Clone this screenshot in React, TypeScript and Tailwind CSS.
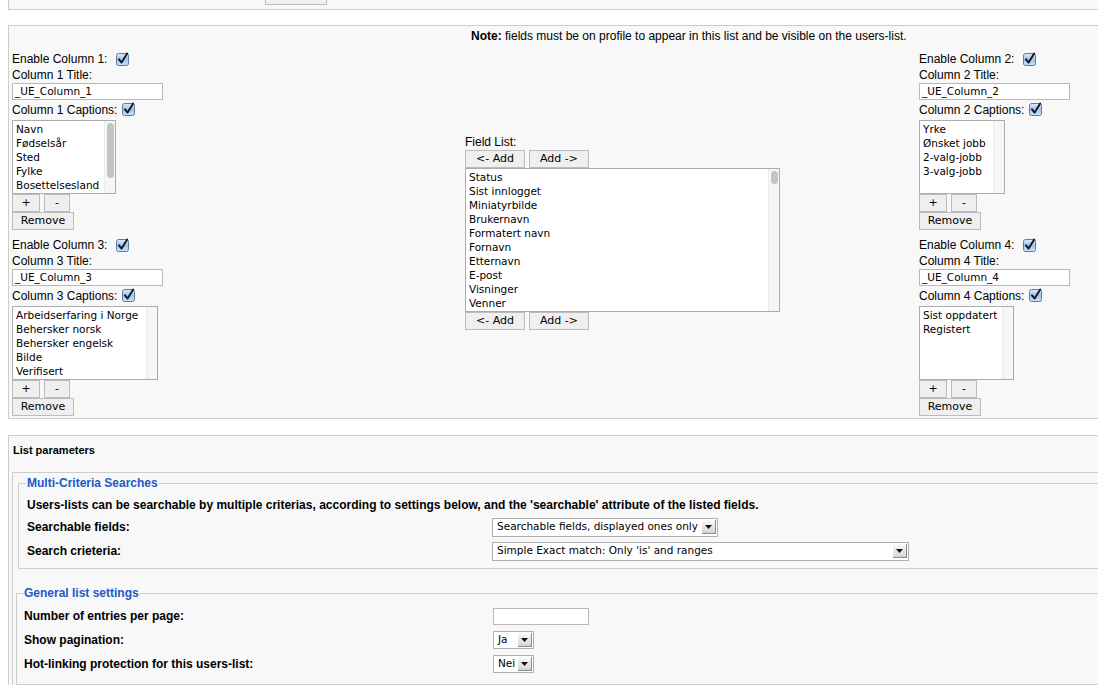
import React from 'react';

const sans = "font-['Liberation_Sans',Arial,sans-serif]";
const lucida = "font-['DejaVu_Sans',Verdana,sans-serif]";

// --- small widgets ---

const Check: React.FC<{ className?: string }> = ({ className = '' }) => (
  <svg width="13" height="13" viewBox="0 0 13 13" className={`overflow-visible ${className}`}>
    <defs>
      <linearGradient id="cbFill" x1="0" y1="0" x2="0" y2="1">
        <stop offset="0" stopColor="#dcecfc" />
        <stop offset="0.5" stopColor="#9cc4ee" />
        <stop offset="1" stopColor="#cfe4fa" />
      </linearGradient>
    </defs>
    <rect x="0.5" y="0.5" width="12" height="12" rx="2" fill="url(#cbFill)" stroke="#5b7aa8" />
    <path d="M3 6.3 L5.6 9.6 L11.2 0.6" fill="none" stroke="#161616" strokeWidth="1.9" strokeLinecap="round" strokeLinejoin="round" />
  </svg>
);

const Btn: React.FC<{ w: string; children: React.ReactNode }> = ({ w, children }) => (
  <div className={`flex h-[18px] items-center justify-center border border-[#bcbcbc] bg-[#efefef] text-[11px] text-black ${lucida} ${w}`}>
    {children}
  </div>
);

interface ListBoxProps {
  w: string;
  h: string;
  items: string[];
  thumb?: string;
}

const ListBox: React.FC<ListBoxProps> = ({ w, h, items, thumb }) => (
  <div className={`flex border border-[#acacac] bg-white ${w} ${h}`}>
    <div className={`flex-1 pl-[3px] pt-[1px] text-[10.5px] leading-[14px] text-black ${lucida}`}>
      {items.map((it) => (
        <div key={it} className="whitespace-nowrap">{it}</div>
      ))}
    </div>
    <div className="flex w-[11px] justify-center border-l border-[#ececec] bg-[#f6f6f6]">
      {thumb && <div className={`mt-[2px] w-[7px] rounded-full bg-[#c3c3c3] ${thumb}`} />}
    </div>
  </div>
);

const Select: React.FC<{ w: string; h: string; text: string }> = ({ w, h, text }) => (
  <div className={`flex items-center justify-between border border-[#b0b0b0] bg-white pl-[4px] pr-[1px] ${w} ${h}`}>
    <span className={`whitespace-nowrap text-[10.5px] text-black ${lucida}`}>{text}</span>
    <div className="flex h-[14px] w-[14px] shrink-0 items-center justify-center border-b border-r border-[#8a8a8a] bg-gradient-to-b from-[#fbfbfb] to-[#d4d4d4]">
      <svg width="7" height="4" viewBox="0 0 7 4">
        <polygon points="0,0 7,0 3.5,4" fill="#111" />
      </svg>
    </div>
  </div>
);

// --- column block ---

interface ColumnProps {
  n: number;
  items: string[];
  listW: string;
  thumb?: string;
}

const ColumnBlock: React.FC<ColumnProps> = ({ n, items, listW, thumb }) => (
  <div className="flex flex-col text-[12px] text-black">
    <div className="flex h-[16px] items-center">
      Enable Column {n}:<Check className="ml-[9px]" />
    </div>
    <div className="flex h-[16px] items-center">Column {n} Title:</div>
    <div className={`flex h-[17px] w-[151px] items-center border border-[#b8b8b8] bg-white pl-[2px] text-[10.5px] ${lucida}`}>
      _UE_Column_{n}
    </div>
    <div className="flex h-[19px] items-center">
      Column {n} Captions:<Check className="ml-[5px]" />
    </div>
    <div className="mt-[1px]">
      <ListBox w={listW} h="h-[74px]" items={items} thumb={thumb} />
    </div>
    <div className="flex gap-[4px]">
      <Btn w="w-[28px]">+</Btn>
      <Btn w="w-[26px]">-</Btn>
    </div>
    <Btn w="w-[62px]">Remove</Btn>
  </div>
);

const fieldList = [
  'Status',
  'Sist innlogget',
  'Miniatyrbilde',
  'Brukernavn',
  'Formatert navn',
  'Fornavn',
  'Etternavn',
  'E-post',
  'Visninger',
  'Venner',
];

export default function App() {
  return (
    <div className={`h-[686px] w-[1098px] overflow-hidden bg-white ${sans}`}>
      <div className="w-[1400px] pl-[8px]">
        {/* previous panel, cut off */}
        <div className="flex h-[10px] items-end overflow-hidden border-b border-l border-[#cdcdcd] bg-[#f8f8f8] pb-[4px] pl-[256px]">
          <Btn w="w-[62px] shrink-0">Remove</Btn>
        </div>

        {/* columns panel */}
        <div className="mt-[15px] border-b border-l border-t border-[#cdcdcd] bg-[#f8f8f8] pb-[2px] pl-[3px]">
          <div className="flex h-[20px] items-center pl-[459px] text-[12px] text-black">
            <b>Note:</b>&nbsp;fields must be on profile to appear in this list and be visible on the users-list.
          </div>
          <div className="grid grid-cols-[453px_454px_1fr] pt-[5px]">
            <div className="flex flex-col gap-[7px]">
              <ColumnBlock n={1} items={['Navn', 'Fødselsår', 'Sted', 'Fylke', 'Bosettelsesland']} listW="w-[104px]" thumb="h-[55px]" />
              <ColumnBlock n={3} items={['Arbeidserfaring i Norge', 'Behersker norsk', 'Behersker engelsk', 'Bilde', 'Verifisert']} listW="w-[146px]" />
            </div>

            <div className="flex items-center pb-[3px]">
              <div className="flex flex-col text-[12px] text-black">
                <div className="flex h-[16px] items-center">Field List:</div>
                <div className="flex gap-[4px]">
                  <Btn w="w-[60px]">&lt;- Add</Btn>
                  <Btn w="w-[60px]">Add -&gt;</Btn>
                </div>
                <ListBox w="w-[315px]" h="h-[144px]" items={fieldList} thumb="h-[13px]" />
                <div className="flex gap-[4px]">
                  <Btn w="w-[60px]">&lt;- Add</Btn>
                  <Btn w="w-[60px]">Add -&gt;</Btn>
                </div>
              </div>
            </div>

            <div className="flex flex-col gap-[7px]">
              <ColumnBlock n={2} items={['Yrke', 'Ønsket jobb', '2-valg-jobb', '3-valg-jobb']} listW="w-[86px]" />
              <ColumnBlock n={4} items={['Sist oppdatert', 'Registert']} listW="w-[95px]" />
            </div>
          </div>
        </div>

        {/* list parameters panel */}
        <div className="mt-[16px] border-l border-t border-[#cdcdcd] bg-[#f8f8f8] pl-[3px]">
          <div className="h-[36px] pl-[1px] pt-[7px] text-[11px] font-bold leading-[14px] text-black">List parameters</div>
          <div className="border-l border-t border-[#cdcdcd] pl-[5px] pt-[3px]">
            <fieldset className="border border-[#cdcdcd] pb-[5px] pl-[7px]">
              <legend className="px-[1px] text-[12px] font-bold leading-[14px] text-[#2358c6]">Multi-Criteria Searches</legend>
              <div className="mt-[5px] flex h-[20px] items-center pl-[1px] text-[12px] font-bold text-black">
                Users-lists can be searchable by multiple criterias, according to settings below, and the 'searchable' attribute of the listed fields.
              </div>
              <div className="flex h-[24px] items-center">
                <div className="w-[466px] pl-[1px] text-[12px] font-bold text-black">Searchable fields:</div>
                <Select w="w-[226px]" h="h-[19px]" text="Searchable fields, displayed ones only" />
              </div>
              <div className="flex h-[24px] items-center">
                <div className="w-[466px] pl-[1px] text-[12px] font-bold text-black">Search crieteria:</div>
                <Select w="w-[417px]" h="h-[19px]" text="Simple Exact match: Only 'is' and ranges" />
              </div>
            </fieldset>

            <fieldset className="-ml-[2px] mt-[17px] border border-[#cdcdcd] pb-[8px] pl-[7px]">
              <legend className="text-[12px] font-bold leading-[14px] text-[#2358c6]">General list settings</legend>
              <div className="pt-[4px]">
                <div className="flex h-[24px] items-center">
                  <div className="w-[469px] text-[12px] font-bold text-black">Number of entries per page:</div>
                  <div className="h-[17px] w-[96px] border border-[#b8b8b8] bg-white" />
                </div>
                <div className="flex h-[24px] items-center">
                  <div className="w-[469px] text-[12px] font-bold text-black">Show pagination:</div>
                  <Select w="w-[41px]" h="h-[18px]" text="Ja" />
                </div>
                <div className="flex h-[24px] items-center">
                  <div className="w-[469px] text-[12px] font-bold text-black">Hot-linking protection for this users-list:</div>
                  <Select w="w-[41px]" h="h-[18px]" text="Nei" />
                </div>
              </div>
            </fieldset>
          </div>
        </div>
      </div>
    </div>
  );
}
